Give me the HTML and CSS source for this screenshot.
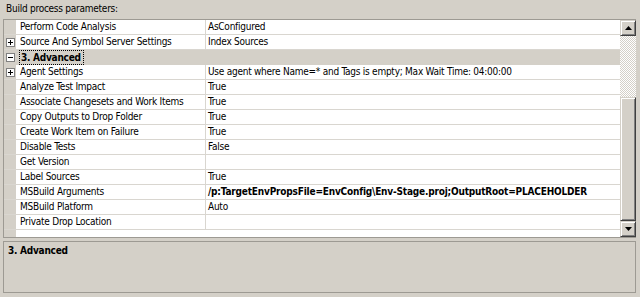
FILE: index.html
```html
<!DOCTYPE html>
<html>
<head>
<meta charset="utf-8">
<link rel="stylesheet" href="styles.css">
</head>
<body>
<div class="page">
  <div class="caption">Build process parameters:</div>
  <div class="grid">
    <div class="rows">
      <div class="row"><div class="gutter"></div><div class="name">Perform Code Analysis</div><div class="value">AsConfigured</div></div>
      <div class="row"><div class="gutter"><span class="box plus"></span></div><div class="name">Source And Symbol Server Settings</div><div class="value">Index Sources</div></div>
      <div class="row cat"><div class="gutter"><span class="box minus"></span></div><div class="catname"><span class="focus">3. Advanced</span></div></div>
      <div class="row"><div class="gutter"><span class="box plus"></span></div><div class="name">Agent Settings</div><div class="value">Use agent where Name=* and Tags is empty; Max Wait Time: 04:00:00</div></div>
      <div class="row"><div class="gutter"></div><div class="name">Analyze Test Impact</div><div class="value">True</div></div>
      <div class="row"><div class="gutter"></div><div class="name">Associate Changesets and Work Items</div><div class="value">True</div></div>
      <div class="row"><div class="gutter"></div><div class="name">Copy Outputs to Drop Folder</div><div class="value">True</div></div>
      <div class="row"><div class="gutter"></div><div class="name">Create Work Item on Failure</div><div class="value">True</div></div>
      <div class="row"><div class="gutter"></div><div class="name">Disable Tests</div><div class="value">False</div></div>
      <div class="row"><div class="gutter"></div><div class="name">Get Version</div><div class="value"></div></div>
      <div class="row"><div class="gutter"></div><div class="name">Label Sources</div><div class="value">True</div></div>
      <div class="row"><div class="gutter"></div><div class="name">MSBuild Arguments</div><div class="value bold">/p:TargetEnvPropsFile=EnvConfig\Env-Stage.proj;OutputRoot=PLACEHOLDER</div></div>
      <div class="row"><div class="gutter"></div><div class="name">MSBuild Platform</div><div class="value">Auto</div></div>
      <div class="row"><div class="gutter"></div><div class="name">Private Drop Location</div><div class="value"></div></div>
      <div class="filler"><div class="gutter"></div><div class="fillwhite"></div></div>
    </div>
    <div class="scrollbar">
      <div class="sbtn"><svg width="7" height="4" viewBox="0 0 7 4"><path d="M3.5 0L7 4H0Z" fill="#000"/></svg></div>
      <div class="track"></div>
      <div class="thumb"></div>
      <div class="sbtn"><svg width="7" height="4" viewBox="0 0 7 4"><path d="M0 0H7L3.5 4Z" fill="#000"/></svg></div>
    </div>
  </div>
  <div class="desc"><div class="desctitle">3. Advanced</div></div>
</div>
</body>
</html>
```
FILE: styles.css
```css
html, body {
  margin: 0;
  padding: 0;
  background: #d4d0c8;
  font-family: "DejaVu Sans Condensed", "DejaVu Sans", sans-serif;
  font-stretch: condensed;
  font-size: 10px;
  letter-spacing: -0.25px;
  color: #000;
}
.page {
  width: 640px;
  height: 297px;
  padding: 0 4px 0 3px;
  box-sizing: border-box;
  display: flex;
  flex-direction: column;
}
.caption {
  height: 19px;
  line-height: 18px;
  padding-left: 3px;
  box-sizing: border-box;
}
.grid {
  height: 219px;
  display: flex;
  border-top: 1px solid #9d9a93;
  border-left: 1px solid #9d9a93;
  border-bottom: 1px solid #9d9a93;
  box-sizing: border-box;
  background: #fff;
}
.rows {
  flex: 1;
  min-width: 0;
  display: flex;
  flex-direction: column;
}
.row {
  display: flex;
  height: 15px;
  border-bottom: 1px solid #d9d6d0;
  box-sizing: border-box;
  background: #fff;
  line-height: 14px;
}
.gutter {
  width: 12px;
  flex: none;
  background: #d4d0c8;
  display: flex;
  align-items: center;
  justify-content: center;
}
.name {
  width: 190px;
  flex: none;
  padding-left: 4px;
  box-sizing: border-box;
  border-right: 1px solid #d9d6d0;
  white-space: nowrap;
  overflow: hidden;
}
.value {
  flex: 1;
  min-width: 0;
  padding-left: 2px;
  white-space: nowrap;
  overflow: hidden;
}
.bold {
  font-weight: bold;
  letter-spacing: -0.19px;
}
.row.cat {
  background: #d4d0c8;
  border-bottom-color: #d4d0c8;
}
.catname {
  flex: 1;
  padding-left: 3px;
  display: flex;
  align-items: center;
}
.focus {
  font-weight: bold;
  border: 1px dotted #000;
  padding: 0 2px 0 1px;
  line-height: 13px;
}
.box {
  width: 9px;
  height: 9px;
  border: 1px solid #808080;
  background: #fff;
  box-sizing: border-box;
  position: relative;
}
.box::before {
  content: "";
  position: absolute;
  left: 1px;
  top: 3px;
  width: 5px;
  height: 1px;
  background: #000;
}
.box.plus::after {
  content: "";
  position: absolute;
  left: 3px;
  top: 1px;
  width: 1px;
  height: 5px;
  background: #000;
}
.filler {
  flex: 1;
  display: flex;
}
.fillwhite {
  flex: 1;
  background: #fff;
}
.scrollbar {
  width: 16px;
  flex: none;
  display: flex;
  flex-direction: column;
  background: repeating-conic-gradient(#ffffff 0 25%, #d4d0c8 0 50%) 0 0 / 2px 2px;
}
.sbtn, .thumb {
  background: #d4d0c8;
  border-top: 1px solid #d4d0c8;
  border-left: 1px solid #d4d0c8;
  border-right: 1px solid #404040;
  border-bottom: 1px solid #404040;
  box-shadow: inset 1px 1px 0 #fff, inset -1px -1px 0 #808080;
  box-sizing: border-box;
}
.sbtn {
  height: 16px;
  flex: none;
  display: flex;
  align-items: center;
  justify-content: center;
}
.track {
  height: 61px;
  flex: none;
}
.thumb {
  flex: 1;
}
.desc {
  margin-top: 3px;
  height: 52px;
  border: 1px solid #9d9a93;
  box-sizing: border-box;
  padding: 2px 4px;
}
.desctitle {
  font-weight: bold;
  line-height: 14px;
}
```
